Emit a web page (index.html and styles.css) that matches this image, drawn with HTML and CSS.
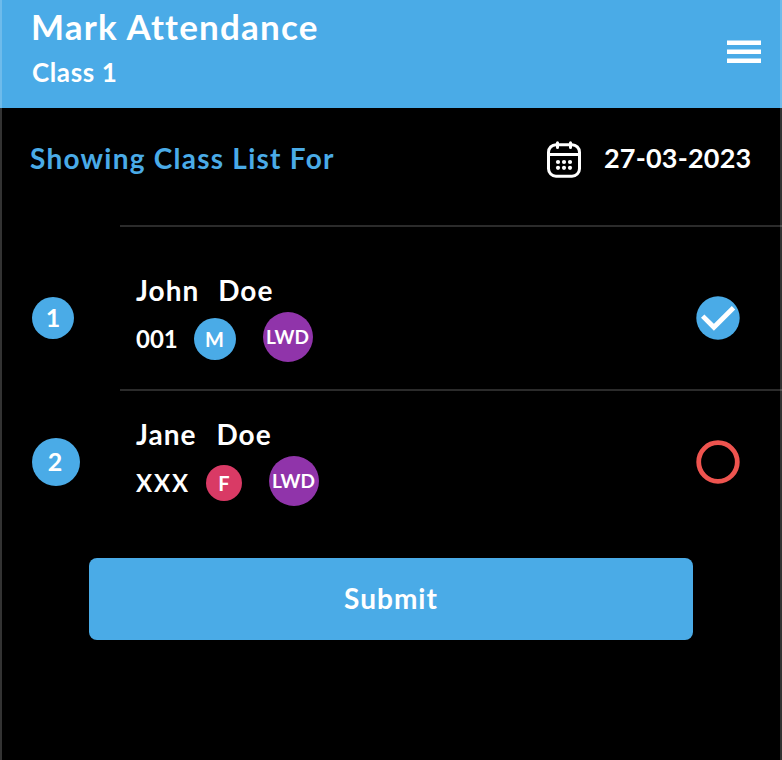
FILE: index.html
```
<!DOCTYPE html>
<html lang="en">
<head>
<meta charset="utf-8">
<title>Mark Attendance</title>
<link rel="stylesheet" href="styles.css">
</head>
<body>
<div class="screen">
  <header class="header">
    <div>
      <h1 class="title">Mark Attendance</h1>
      <p class="subtitle">Class 1</p>
    </div>
    <svg class="menu" width="34" height="24" viewBox="0 0 34 24" fill="#fff"><path d="M0 .4h34v4.5H0zM0 9.4h34v4.5H0zM0 18.5h34v4.5H0z"/></svg>
  </header>
  <section class="toolbar">
    <h2 class="caption">Showing Class List For</h2>
    <svg class="calendar" width="34" height="38" viewBox="0 0 34 38" fill="none" stroke="#fff" stroke-width="3" stroke-linecap="round"><rect x="1.5" y="3.7" width="31" height="31.5" rx="7.5"/><path d="M2 13.5h30M10.5 1.8v4.7M23.5 1.8v4.7"/><g fill="#fff" stroke="none"><circle cx="11" cy="21" r="2.1"/><circle cx="17" cy="21" r="2.1"/><circle cx="23" cy="21" r="2.1"/><circle cx="11" cy="26.8" r="2.1"/><circle cx="17" cy="26.8" r="2.1"/><circle cx="23" cy="26.8" r="2.1"/></g></svg>
    <span class="date">27-03-2023</span>
  </section>
  <main>
    <article class="row first">
      <div class="index"><span class="number small">1</span></div>
      <div class="student">
        <div class="name"><span>John</span><span>Doe</span></div>
        <div class="details"><span class="roll">001</span><span class="badge male">M</span><span class="badge lwd">LWD</span></div>
      </div>
      <svg class="status" width="44" height="44" viewBox="0 0 44 44"><circle cx="22" cy="22" r="21.7" fill="#4aabe7"/><path d="m6.7 20.1 11.2 11.2L37.5 11.7" fill="none" stroke="#fff" stroke-width="4.8"/></svg>
    </article>
    <article class="row second">
      <div class="index"><span class="number">2</span></div>
      <div class="student">
        <div class="name"><span>Jane</span><span>Doe</span></div>
        <div class="details"><span class="roll">XXX</span><span class="badge female">F</span><span class="badge lwd">LWD</span></div>
      </div>
      <svg class="status" width="44" height="44" viewBox="0 0 44 44"><circle cx="22" cy="22" r="19.3" fill="none" stroke="#ee544f" stroke-width="4.8"/></svg>
    </article>
  </main>
  <button class="submit">Submit</button>
</div>
</body>
</html>
```
FILE: styles.css
```
* { box-sizing: border-box; margin: 0; }
body { background: #000; color: #fff; font-family: Lato, "Open Sans", sans-serif; font-weight: 700; }
.screen { position: relative; height: 760px; overflow: hidden; }
.screen::after { content: ""; position: absolute; inset: 0; border: solid rgba(255, 255, 255, .2); border-width: 0 2px; pointer-events: none; }
.header { height: 108px; padding: 5px 21px 0 31px; display: flex; justify-content: space-between; background: #4aabe7; }
.title { font-size: 35px; line-height: 42px; font-weight: 700; letter-spacing: 1.2px; }
.subtitle { padding-left: 1px; font-size: 26px; line-height: 50px; letter-spacing: .6px; }
.menu { margin-top: 35px; }
.toolbar { height: 117px; padding: 0 30px 0 30px; display: flex; align-items: flex-start; }
.caption { flex: 1; font-size: 28px; line-height: 100px; font-weight: 700; color: #4aabe7; letter-spacing: 1.25px; white-space: nowrap; }
.calendar { margin: 33px 23px 0 0; }
.date { width: 148px; font-size: 27px; line-height: 100px; letter-spacing: .2px; }
.row { display: grid; grid-template-columns: 120px 1fr 86px; }
.first { height: 164px; }
.second { height: 169px; }
.index { padding: 49px 0 0 32px; }
.first .index { padding-top: 72px; }
.number { display: flex; align-items: center; justify-content: center; width: 48px; height: 48px; padding: 0 2px 2px 0; border-radius: 50%; background: #4aabe7; font-size: 25px; }
.number.small { width: 42px; height: 42px; padding-right: 0; }
.student, .status { grid-row: 1; }
.student { grid-column: 2 / 4; border-top: 2px solid #2b2b2b; padding: 25px 0 0 16px; height: 100%; }
.first .student { padding-top: 45px; }
.status { grid-column: 3; margin-top: 51px; }
.first .status { margin-top: 71px; }
.name { display: flex; gap: 20px; margin-bottom: 2px; font-size: 28px; line-height: 36px; letter-spacing: 1px; }
.first .name { gap: 19px; }
.details { display: flex; height: 54px; }
.roll { width: 42px; font-size: 24px; line-height: 57px; }
.second .roll { width: 53px; letter-spacing: 1.9px; }
.badge { display: grid; place-items: center; padding-bottom: 1px; border-radius: 50%; font-size: 20px; }
.male { width: 42px; height: 42px; margin: 8px 27px 0 16px; padding-right: 1px; background: #4aabe7; }
.female { width: 36px; height: 36px; margin: 11px 27px 0 17px; background: #d93a65; }
.lwd { width: 50px; height: 50px; margin-top: 2px; padding: 0 1px 2px 0; font-size: 19px; background: #9034aa; }
.submit { display: block; width: 604px; height: 82px; margin: 0 0 0 89px; padding: 0 0 3px; border: 0; border-radius: 8px; background: #4aabe7; color: #fff; font: inherit; font-size: 28px; letter-spacing: 1px; }
```
